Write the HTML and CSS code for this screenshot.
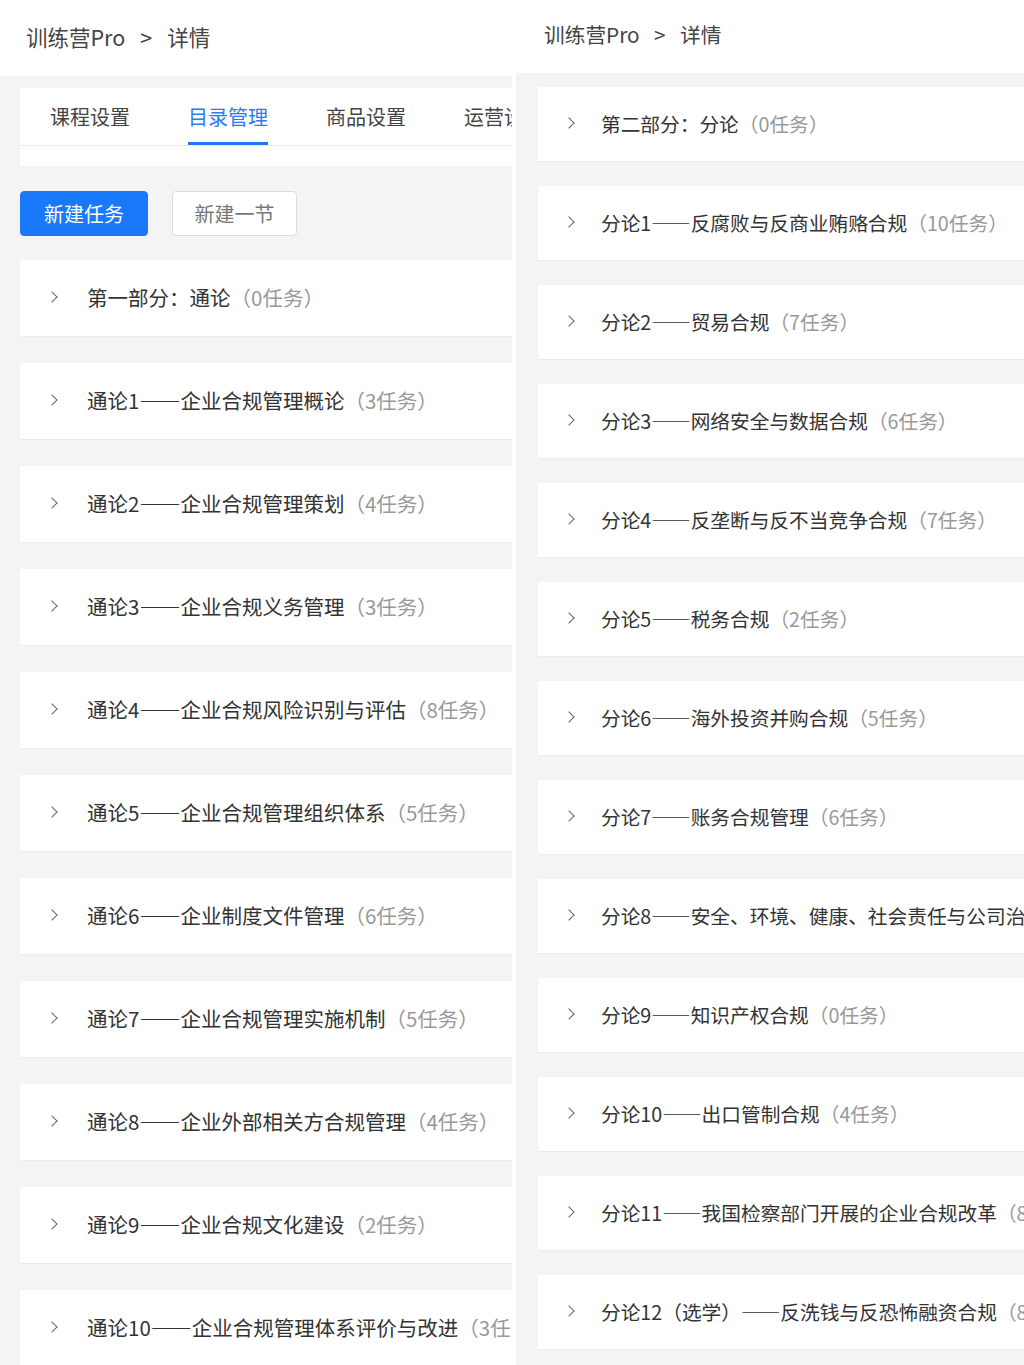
FILE: index.html
```html
<!DOCTYPE html>
<html lang="zh-CN">
<head>
    <meta charset="UTF-8">
    <title>训练营Pro - 详情</title>
    <link rel="stylesheet" href="styles.css">
</head>
<body>
<div class="page">
    <!--左侧：通论-->
    <div class="panel panel-left">
        <div class="crumb">训练营Pro<span class="sep">&gt;</span>详情</div>
        <div class="main">
            <div class="tabs">
                <ul class="tab-nav">
                    <li>课程设置</li>
                    <li class="current">目录管理</li>
                    <li>商品设置</li>
                    <li>运营设置</li>
                </ul>
            </div>
            <div class="actions">
                <span class="btn btn-primary">新建任务</span>
                <span class="btn">新建一节</span>
            </div>
            <ul class="list">
                <li><i class="arrow"></i>第一部分：通论<span class="num">（0任务）</span></li>
                <li><i class="arrow"></i>通论1——企业合规管理概论<span class="num">（3任务）</span></li>
                <li><i class="arrow"></i>通论2——企业合规管理策划<span class="num">（4任务）</span></li>
                <li><i class="arrow"></i>通论3——企业合规义务管理<span class="num">（3任务）</span></li>
                <li><i class="arrow"></i>通论4——企业合规风险识别与评估<span class="num">（8任务）</span></li>
                <li><i class="arrow"></i>通论5——企业合规管理组织体系<span class="num">（5任务）</span></li>
                <li><i class="arrow"></i>通论6——企业制度文件管理<span class="num">（6任务）</span></li>
                <li><i class="arrow"></i>通论7——企业合规管理实施机制<span class="num">（5任务）</span></li>
                <li><i class="arrow"></i>通论8——企业外部相关方合规管理<span class="num">（4任务）</span></li>
                <li><i class="arrow"></i>通论9——企业合规文化建设<span class="num">（2任务）</span></li>
                <li><i class="arrow"></i>通论10——企业合规管理体系评价与改进<span class="num">（3任务）</span></li>
            </ul>
        </div>
    </div>

    <!--右侧：分论-->
    <div class="panel panel-right">
        <div class="crumb">训练营Pro<span class="sep">&gt;</span>详情</div>
        <div class="main">
            <ul class="list">
                <li><i class="arrow"></i>第二部分：分论<span class="num">（0任务）</span></li>
                <li><i class="arrow"></i>分论1——反腐败与反商业贿赂合规<span class="num">（10任务）</span></li>
                <li><i class="arrow"></i>分论2——贸易合规<span class="num">（7任务）</span></li>
                <li><i class="arrow"></i>分论3——网络安全与数据合规<span class="num">（6任务）</span></li>
                <li><i class="arrow"></i>分论4——反垄断与反不当竞争合规<span class="num">（7任务）</span></li>
                <li><i class="arrow"></i>分论5——税务合规<span class="num">（2任务）</span></li>
                <li><i class="arrow"></i>分论6——海外投资并购合规<span class="num">（5任务）</span></li>
                <li><i class="arrow"></i>分论7——账务合规管理<span class="num">（6任务）</span></li>
                <li><i class="arrow"></i>分论8——安全、环境、健康、社会责任与公司治理<span class="num">（6任务）</span></li>
                <li><i class="arrow"></i>分论9——知识产权合规<span class="num">（0任务）</span></li>
                <li><i class="arrow"></i>分论10——出口管制合规<span class="num">（4任务）</span></li>
                <li><i class="arrow"></i>分论11——我国检察部门开展的企业合规改革<span class="num">（8任务）</span></li>
                <li><i class="arrow"></i>分论12（选学）——反洗钱与反恐怖融资合规<span class="num">（8任务）</span></li>
            </ul>
        </div>
    </div>
</div>
</body>
</html>
```

FILE: styles.css
```css
*{
    margin: 0;
    padding: 0;
    box-sizing: border-box;
}

ul{
    list-style: none;
}

body{
    background-color: #ffffff;
    font-family: "Noto Sans CJK SC", "Noto Sans", sans-serif;
    color: #333333;
}

.page{
    display: flex;
    gap: 4px;
    height: 1365px;
    overflow: hidden;
}

.panel{
    display: flex;
    flex-direction: column;
    overflow: hidden;
}
.panel-left{
    width: 512px;
    flex: none;
}
.panel-right{
    flex: 1;
    min-width: 0;
}

.crumb{
    flex: none;
    white-space: nowrap;
    color: #444444;
}
.crumb .sep{
    margin: 0 0.7em;
}
.panel-left .crumb{
    height: 76px;
    line-height: 74px;
    padding-left: 26px;
    font-size: 21.5px;
}
.panel-right .crumb{
    height: 73px;
    line-height: 68px;
    padding-left: 28px;
    font-size: 20.7px;
}

.main{
    flex: 1;
    background-color: #f4f4f4;
    overflow: hidden;
}
.panel-left .main{
    padding: 12px 0 0 20px;
}
.panel-right .main{
    padding: 14px 0 0 22px;
}

/*选项卡*/
.tabs{
    background-color: #ffffff;
    padding-bottom: 20px;
}
.tab-nav{
    display: flex;
    gap: 58px;
    padding-left: 30px;
    border-bottom: 1px solid #ebebeb;
    white-space: nowrap;
}
.tab-nav li{
    height: 57px;
    line-height: 58px;
    font-size: 20px;
    color: #444444;
    border-bottom: 3px solid transparent;
    flex: none;
}
.tab-nav li.current{
    color: #2b7bf5;
    border-bottom-color: #1f74f2;
}

/*按钮*/
.actions{
    display: flex;
    gap: 24px;
    margin: 25px 0 24px;
}
.btn{
    display: inline-block;
    width: 125px;
    height: 45px;
    line-height: 43px;
    text-align: center;
    font-size: 20px;
    color: #777777;
    background-color: #ffffff;
    border: 1px solid #dcdcdc;
    border-radius: 4px;
}
.btn-primary{
    width: 128px;
    color: #ffffff;
    background-color: #1a78fb;
    border-color: #1a78fb;
}

/*目录列表*/
.list li{
    display: flex;
    align-items: center;
    background-color: #ffffff;
    border-bottom: 1px solid #ececec;
    white-space: nowrap;
    overflow: hidden;
}
.panel-left .list li{
    height: 77px;
    margin-bottom: 26px;
    padding-left: 28px;
    padding-bottom: 3px;
    font-size: 20.5px;
}
.panel-right .list li{
    height: 75px;
    margin-bottom: 24px;
    padding-left: 27px;
    padding-bottom: 2px;
    font-size: 19.7px;
}

.arrow{
    flex: none;
    width: 8px;
    height: 8px;
    border-top: 1.5px solid #666666;
    border-right: 1.5px solid #666666;
    transform: rotate(45deg);
}
.panel-left .arrow{
    margin-right: 31px;
}
.panel-right .arrow{
    margin-right: 28px;
}

.num{
    color: #999999;
}
```
